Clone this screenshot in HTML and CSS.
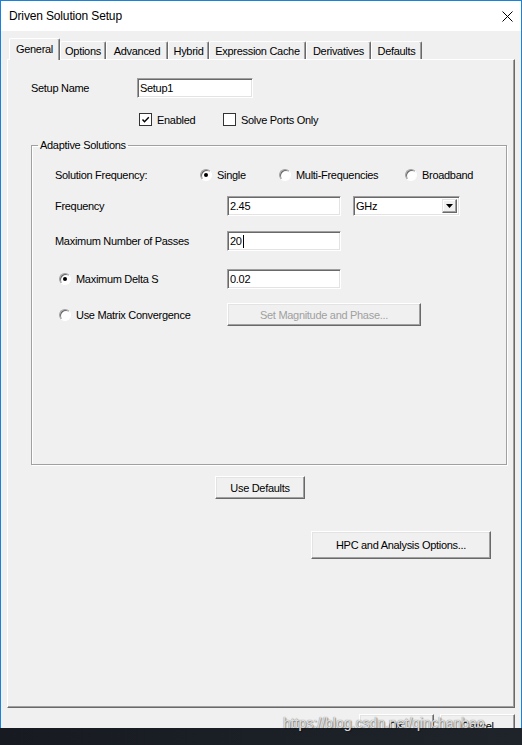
FILE: index.html
```html
<!DOCTYPE html>
<html lang="en">
<head>
    <meta charset="UTF-8">
    <meta name="viewport" content="width=device-width, initial-scale=1.0">
    <title>Driven Solution Setup</title>
    <link rel="stylesheet" href="styles.css">
</head>
<body>
    <div class="screen">
        <div class="window">
            <!-- Title bar -->
            <div class="titlebar">
                <span class="title">Driven Solution Setup</span>
                <span class="close">
                    <svg width="11" height="11" viewBox="0 0 11 11"><path d="M0.5 0.5L10.5 10.5M10.5 0.5L0.5 10.5" stroke="#000" stroke-width="1" fill="none"/></svg>
                </span>
            </div>

            <div class="dialog">
                <!-- Tab strip -->
                <div class="tabs">
                    <div class="tab tab-general active">General</div>
                    <div class="tab tab-options">Options</div>
                    <div class="tab tab-advanced">Advanced</div>
                    <div class="tab tab-hybrid">Hybrid</div>
                    <div class="tab tab-cache">Expression Cache</div>
                    <div class="tab tab-deriv">Derivatives</div>
                    <div class="tab tab-defaults">Defaults</div>
                </div>

                <!-- General page -->
                <div class="panel">
                    <div class="setup-row">
                        <span class="setup-label">Setup Name</span>
                        <div class="text-field setup-field">Setup1</div>
                    </div>

                    <div class="check-row">
                        <label class="check-item check-enabled">
                            <span class="checkbox">
                                <svg width="11" height="11" viewBox="0 0 11 11"><path d="M2.5 5.5L4.5 7.8L8.8 3.2" stroke="#000" stroke-width="1.4" fill="none"/></svg>
                            </span>
                            Enabled
                        </label>
                        <label class="check-item">
                            <span class="checkbox"></span>
                            Solve Ports Only
                        </label>
                    </div>

                    <fieldset class="group">
                        <legend>Adaptive Solutions</legend>

                        <div class="form-row">
                            <span class="freq-label">Solution Frequency:</span>
                            <span class="radio-item radio-single"><span class="radio checked"></span>Single</span>
                            <span class="radio-item radio-multi"><span class="radio"></span>Multi-Frequencies</span>
                            <span class="radio-item"><span class="radio"></span>Broadband</span>
                        </div>

                        <div class="form-row row-freq">
                            <span class="field-label">Frequency</span>
                            <div class="text-field value-field">2.45</div>
                            <div class="select">
                                <span class="select-value">GHz</span>
                                <span class="select-arrow">
                                    <svg width="7" height="4" viewBox="0 0 7 4"><path d="M0 0H7L3.5 4Z" fill="#000"/></svg>
                                </span>
                            </div>
                        </div>

                        <div class="form-row row-passes">
                            <span class="field-label">Maximum Number of Passes</span>
                            <div class="text-field value-field">20<span class="caret"></span></div>
                        </div>

                        <div class="form-row row-delta">
                            <span class="field-label radio-item radio-indent"><span class="radio checked"></span>Maximum Delta S</span>
                            <div class="text-field value-field">0.02</div>
                        </div>

                        <div class="form-row row-matrix">
                            <span class="field-label radio-item radio-indent"><span class="radio"></span>Use Matrix Convergence</span>
                            <button class="button button-phase" disabled>Set Magnitude and Phase...</button>
                        </div>
                    </fieldset>

                    <button class="button button-defaults">Use Defaults</button>
                    <button class="button button-hpc">HPC and Analysis Options...</button>
                </div>

                <div class="footer">
                    <button class="button button-footer">OK</button>
                    <button class="button button-footer">Cancel</button>
                </div>
            </div>
        </div>

        <div class="taskbar"></div>
        <div class="watermark">https://blog.csdn.net/qinchanbao</div>
    </div>
</body>
</html>
```

FILE: styles.css
```css
* {
    box-sizing: border-box;
}
body {
    margin: 0;
    font-family: "Liberation Sans", Arial, sans-serif;
    font-size: 11px;
    letter-spacing: -0.3px;
    color: #000;
    background: #1b1f26;
}
.screen {
    position: relative;
    width: 522px;
    height: 745px;
    overflow: hidden;
}
.window {
    height: 728px;
    border: 1px solid #1883d7;
    border-bottom: none;
    background: #f0f0f0;
    overflow: hidden;
}
.titlebar {
    height: 30px;
    background: #ffffff;
    display: flex;
    align-items: center;
    padding-left: 8px;
}
.title {
    flex: 1;
    font-size: 12px;
    letter-spacing: -0.15px;
}
.close {
    width: 28px;
    display: flex;
    justify-content: center;
}
.dialog {
    padding: 7px 0 0 6px;
}

/* tabs */
.tabs {
    display: flex;
    align-items: flex-end;
    height: 21px;
    padding-left: 2px;
}
.tab {
    height: 18px;
    display: flex;
    align-items: center;
    justify-content: center;
    background: #f0f0f0;
    border: 1px solid;
    border-color: #ffffff #696969 transparent #ffffff;
    border-bottom: none;
    border-radius: 2px 2px 0 0;
    box-shadow: inset -1px 0 #a0a0a0;
}
.tab.active {
    height: 22px;
    margin-bottom: -1px;
    padding-bottom: 2px;
    position: relative;
    z-index: 1;
}
.tab-general { width: 51px; }
.tab-options { width: 46px; }
.tab-advanced { width: 62px; }
.tab-hybrid { width: 41px; }
.tab-cache { width: 97px; }
.tab-deriv { width: 65px; }
.tab-defaults { width: 51px; }

.panel {
    width: 508px;
    height: 649px;
    border: 1px solid;
    border-color: #ffffff #696969 #696969 #ffffff;
    box-shadow: inset -1px -1px #a0a0a0;
    overflow: hidden;
}

/* fields */
.text-field {
    height: 20px;
    display: flex;
    align-items: center;
    padding: 0 2px;
    background: #ffffff;
    border: 1px solid;
    border-color: #a0a0a0 #ffffff #ffffff #a0a0a0;
    box-shadow: inset 1px 1px #696969, inset -1px -1px #e3e3e3;
}
.caret {
    display: inline-block;
    width: 1px;
    height: 13px;
    margin-left: 1px;
    background: #000;
}
.setup-row {
    display: flex;
    align-items: center;
    height: 20px;
    margin: 18px 0 0 23px;
}
.setup-label {
    width: 106px;
}
.setup-field {
    width: 116px;
}
.check-row {
    display: flex;
    align-items: center;
    height: 13px;
    margin: 15px 0 0 131px;
}
.check-item {
    display: flex;
    align-items: center;
    gap: 5px;
}
.check-enabled {
    width: 84px;
}
.checkbox {
    width: 13px;
    height: 13px;
    background: #ffffff;
    border: 1px solid #333;
    display: flex;
}

/* group box */
.group {
    width: 476px;
    margin: 13px 0 0 23px;
    padding: 13px 0 138px 6px;
    border: 1px solid #a0a0a0;
    box-shadow: inset 1px 1px #ffffff, 1px 1px #ffffff;
}
.group legend {
    padding: 0 2px;
    line-height: 13px;
}
.form-row {
    display: flex;
    align-items: center;
    height: 20px;
    margin-left: 17px;
}
.row-freq { margin-top: 11px; }
.row-passes { margin-top: 15px; }
.row-delta { margin-top: 18px; }
.row-matrix { margin-top: 14px; height: 23px; }
.freq-label {
    width: 145px;
}
.field-label {
    width: 172px;
}
.radio-item {
    display: flex;
    align-items: center;
    gap: 5px;
}
.radio-single { width: 79px; }
.radio-multi { width: 126px; }
.radio-indent {
    padding-left: 4px;
}
.radio {
    position: relative;
    flex-shrink: 0;
    width: 12px;
    height: 12px;
    border-radius: 50%;
    background: #ffffff;
    border: 1px solid;
    border-color: #a0a0a0 #ffffff #ffffff #a0a0a0;
    box-shadow: inset 1px 1px #696969;
}
.radio.checked::after {
    content: "";
    position: absolute;
    left: 3px;
    top: 3px;
    width: 4px;
    height: 4px;
    border-radius: 50%;
    background: #000;
}
.value-field {
    width: 114px;
}
.select {
    display: flex;
    width: 107px;
    height: 20px;
    margin-left: 12px;
    padding: 2px;
    background: #ffffff;
    border: 1px solid;
    border-color: #a0a0a0 #ffffff #ffffff #a0a0a0;
    box-shadow: inset 1px 1px #696969, inset -1px -1px #e3e3e3;
}
.select-value {
    flex: 1;
    display: flex;
    align-items: center;
}
.select-arrow {
    width: 15px;
    display: flex;
    align-items: center;
    justify-content: center;
    background: #f0f0f0;
    border: 1px solid;
    border-color: #e3e3e3 #696969 #696969 #e3e3e3;
    box-shadow: inset -1px -1px #a0a0a0, inset 1px 1px #ffffff;
}

/* buttons */
.button {
    display: block;
    height: 23px;
    padding: 0;
    font: inherit;
    letter-spacing: inherit;
    color: #000;
    background: #f0f0f0;
    border: 1px solid;
    border-color: #ffffff #696969 #696969 #ffffff;
    box-shadow: inset -1px -1px #a0a0a0, inset 1px 1px #e3e3e3;
}
.button-phase {
    width: 194px;
    color: #a0a0a0;
}
.button-defaults {
    width: 90px;
    margin: 11px 0 0 207px;
}
.button-hpc {
    width: 180px;
    height: 28px;
    margin: 32px 0 0 303px;
}
.footer {
    width: 508px;
    display: flex;
    justify-content: flex-end;
    gap: 6px;
    margin-top: 6px;
}
.button-footer {
    width: 75px;
}

.taskbar {
    height: 17px;
    background: linear-gradient(to right, #171b21, #1f242b);
}
.watermark {
    position: absolute;
    left: 283px;
    top: 715px;
    font-size: 14px;
    line-height: 16px;
    letter-spacing: 0;
    color: rgba(255, 255, 255, 0.8);
    text-shadow: 0 0 1px #555, 1px 1px 1px rgba(0, 0, 0, 0.4);
}
```
